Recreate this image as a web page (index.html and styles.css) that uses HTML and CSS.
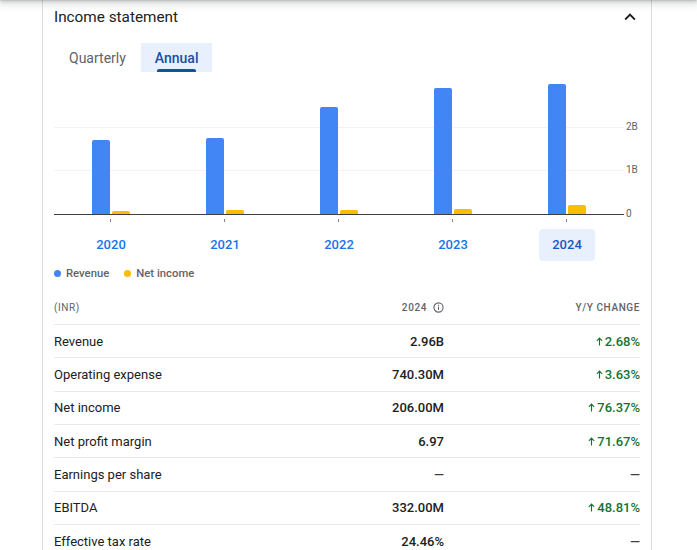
FILE: index.html
```html
<!DOCTYPE html>
<html lang="en">
<head>
<meta charset="utf-8">
<title>Income statement</title>
<link rel="stylesheet" href="styles.css">
</head>
<body>
<div class="topshadow"></div>
<section class="card">
  <header class="card-head">
    <h2 class="title">Income statement</h2>
    <svg class="chev" viewBox="0 0 24 24" aria-hidden="true"><path d="M7.41 15.41 12 10.83l4.59 4.58L18 14l-6-6-6 6z"/></svg>
  </header>

  <div class="tabs">
    <button class="tab">Quarterly</button>
    <button class="tab active">Annual</button>
  </div>

  <div class="chart">
    <div class="plot">
      <div class="gridline g2"></div>
      <div class="gridline g1"></div>
      <div class="slot"><div class="bar rev" style="height:74px"></div><div class="bar ni" style="height:3px"></div></div>
      <div class="slot"><div class="bar rev" style="height:76px"></div><div class="bar ni" style="height:4px"></div></div>
      <div class="slot"><div class="bar rev" style="height:107px"></div><div class="bar ni" style="height:4.5px"></div></div>
      <div class="slot"><div class="bar rev" style="height:126px"></div><div class="bar ni" style="height:5.5px"></div></div>
      <div class="slot"><div class="bar rev" style="height:130px"></div><div class="bar ni" style="height:9px"></div></div>
    </div>
    <div class="axis">
      <span class="ax a2">2B</span>
      <span class="ax a1">1B</span>
      <span class="ax a0">0</span>
    </div>
  </div>

  <div class="years">
    <div class="year"><span>2020</span></div>
    <div class="year"><span>2021</span></div>
    <div class="year"><span>2022</span></div>
    <div class="year"><span>2023</span></div>
    <div class="year sel"><span>2024</span></div>
  </div>

  <div class="legend">
    <span class="lg"><i class="dot blue"></i>Revenue</span>
    <span class="lg"><i class="dot yellow"></i>Net income</span>
  </div>

  <div class="table">
    <div class="row head">
      <span class="lbl">(INR)</span>
      <span class="val">2024 <svg class="info" viewBox="0 0 12 12" aria-hidden="true"><circle cx="6" cy="6" r="5" fill="none" stroke="#5f6368" stroke-width="1.2"/><rect x="5.4" y="5" width="1.2" height="3.6" fill="#5f6368"/><rect x="5.4" y="3" width="1.2" height="1.2" fill="#5f6368"/></svg></span>
      <span class="chg">Y/Y change</span>
    </div>
    <div class="row">
      <span class="lbl">Revenue</span>
      <span class="val">2.96B</span>
      <span class="chg up"><svg class="arrow" viewBox="0 0 8 10" aria-hidden="true"><path d="M4 9.5V1.2M1 4.2 4 1.2l3 3"/></svg>2.68%</span>
    </div>
    <div class="row">
      <span class="lbl">Operating expense</span>
      <span class="val">740.30M</span>
      <span class="chg up"><svg class="arrow" viewBox="0 0 8 10" aria-hidden="true"><path d="M4 9.5V1.2M1 4.2 4 1.2l3 3"/></svg>3.63%</span>
    </div>
    <div class="row">
      <span class="lbl">Net income</span>
      <span class="val">206.00M</span>
      <span class="chg up"><svg class="arrow" viewBox="0 0 8 10" aria-hidden="true"><path d="M4 9.5V1.2M1 4.2 4 1.2l3 3"/></svg>76.37%</span>
    </div>
    <div class="row">
      <span class="lbl">Net profit margin</span>
      <span class="val">6.97</span>
      <span class="chg up"><svg class="arrow" viewBox="0 0 8 10" aria-hidden="true"><path d="M4 9.5V1.2M1 4.2 4 1.2l3 3"/></svg>71.67%</span>
    </div>
    <div class="row">
      <span class="lbl">Earnings per share</span>
      <span class="val dash">—</span>
      <span class="chg dash">—</span>
    </div>
    <div class="row">
      <span class="lbl">EBITDA</span>
      <span class="val">332.00M</span>
      <span class="chg up"><svg class="arrow" viewBox="0 0 8 10" aria-hidden="true"><path d="M4 9.5V1.2M1 4.2 4 1.2l3 3"/></svg>48.81%</span>
    </div>
    <div class="row">
      <span class="lbl">Effective tax rate</span>
      <span class="val">24.46%</span>
      <span class="chg dash">—</span>
    </div>
  </div>
</section>
</body>
</html>
```

FILE: styles.css
```css
* { box-sizing: border-box; }

body {
  margin: 0;
  font-family: Roboto, "Noto Sans", "Liberation Sans", sans-serif;
  color: #202124;
  background: #fff;
  overflow: hidden;
}

.topshadow {
  position: fixed;
  top: -10px;
  left: 0;
  right: 0;
  height: 10px;
  background: #fff;
  box-shadow: 0 1px 3px rgba(60, 64, 67, 0.3), 0 3px 6px 2px rgba(60, 64, 67, 0.15);
  z-index: 5;
}

.card {
  margin-left: 42px;
  width: 610px;
  min-height: 560px;
  border-left: 1px solid #dadce0;
  border-right: 1px solid #dadce0;
  padding: 0 11px;
}

.card-head {
  height: 34px;
  display: flex;
  align-items: center;
  justify-content: space-between;
}

.title {
  margin: 0;
  font-size: 15.3px;
  font-weight: 400;
  color: #202124;
}

.chev {
  width: 22px;
  height: 22px;
  margin-right: -1px;
  fill: #202124;
}

.tabs {
  display: flex;
  margin-top: 9px;
  height: 29px;
}

.tab {
  position: relative;
  height: 29px;
  padding: 0 15px;
  border: 0;
  background: none;
  font-family: inherit;
  font-size: 14px;
  font-weight: 400;
  color: #5f6368;
}

.tab.active {
  background: #e8f0fe;
  color: #174ea6;
  padding: 0 14px;
  font-weight: 500;
}

.tab.active::after {
  content: "";
  position: absolute;
  left: 16px;
  right: 16px;
  bottom: 0;
  height: 3px;
  background: #174ea6;
  border-radius: 2px 2px 0 0;
}

.chart {
  display: flex;
  margin-top: 8px;
}

.plot {
  position: relative;
  width: 570px;
  height: 135px;
  border-bottom: 1px solid #3c4043;
  display: flex;
  align-items: flex-end;
}

.gridline {
  position: absolute;
  left: 0;
  right: 0;
  height: 1px;
  background: #f1f3f4;
}

.g2 { top: 47px; }
.g1 { top: 90px; }

.slot {
  position: relative;
  width: 114px;
  height: 100%;
  display: flex;
  align-items: flex-end;
  justify-content: center;
  gap: 2px;
}

.slot::after {
  content: "";
  position: absolute;
  left: 56px;
  bottom: -8px;
  width: 1px;
  height: 3px;
  background: #80868b;
}

.bar {
  position: relative;
  width: 18px;
  border-radius: 2px 2px 0 0;
}

.rev { background: #4285f4; }
.ni { background: #fbbc04; }

.axis {
  position: relative;
  width: 16px;
  margin-left: 2px;
}

.ax {
  position: absolute;
  left: 0;
  font-size: 10px;
  line-height: 12px;
  color: #5f6368;
}

.a2 { top: 41px; }
.a1 { top: 84px; }
.a0 { top: 128px; }

.years {
  display: flex;
  margin-top: 14px;
}

.year {
  width: 114px;
  display: flex;
  justify-content: center;
}

.year span {
  height: 32px;
  line-height: 32px;
  padding: 0 13px;
  border-radius: 4px;
  font-size: 13px;
  font-weight: 500;
  color: #1a73e8;
}

.year.sel span {
  background: #e8f0fe;
  color: #185abc;
}

.legend {
  display: flex;
  align-items: center;
  gap: 15px;
  height: 16px;
  margin-top: 4px;
  font-size: 11.3px;
  font-weight: 500;
  color: #5f6368;
}

.lg {
  display: flex;
  align-items: center;
  gap: 5px;
}

.dot {
  width: 7px;
  height: 7px;
  border-radius: 50%;
}

.dot.blue { background: #4285f4; }
.dot.yellow { background: #fbbc04; }

.table {
  margin-top: 9.67px;
}

.row {
  display: grid;
  grid-template-columns: 1fr 150px 196px;
  align-items: center;
  height: 33.33px;
  font-size: 13px;
}

.row + .row {
  border-top: 1px solid #e8eaed;
}

.lbl {
  color: #202124;
}

.val {
  display: flex;
  justify-content: flex-end;
  align-items: center;
  font-weight: 500;
  color: #202124;
}

.chg {
  display: flex;
  justify-content: flex-end;
  align-items: center;
  gap: 2px;
  font-weight: 500;
}

.up { color: #137333; }

.dash { color: #3c4043; }

.head {
  font-size: 10px;
  font-weight: 500;
  letter-spacing: 0.6px;
  text-transform: uppercase;
  color: #5f6368;
}

.head .lbl { color: #5f6368; font-weight: 400; }

.head .val { gap: 6px; color: #5f6368; }

.info {
  width: 11px;
  height: 11px;
}

.arrow {
  width: 7px;
  height: 9px;
  fill: none;
  stroke: #137333;
  stroke-width: 1.3;
}
```
